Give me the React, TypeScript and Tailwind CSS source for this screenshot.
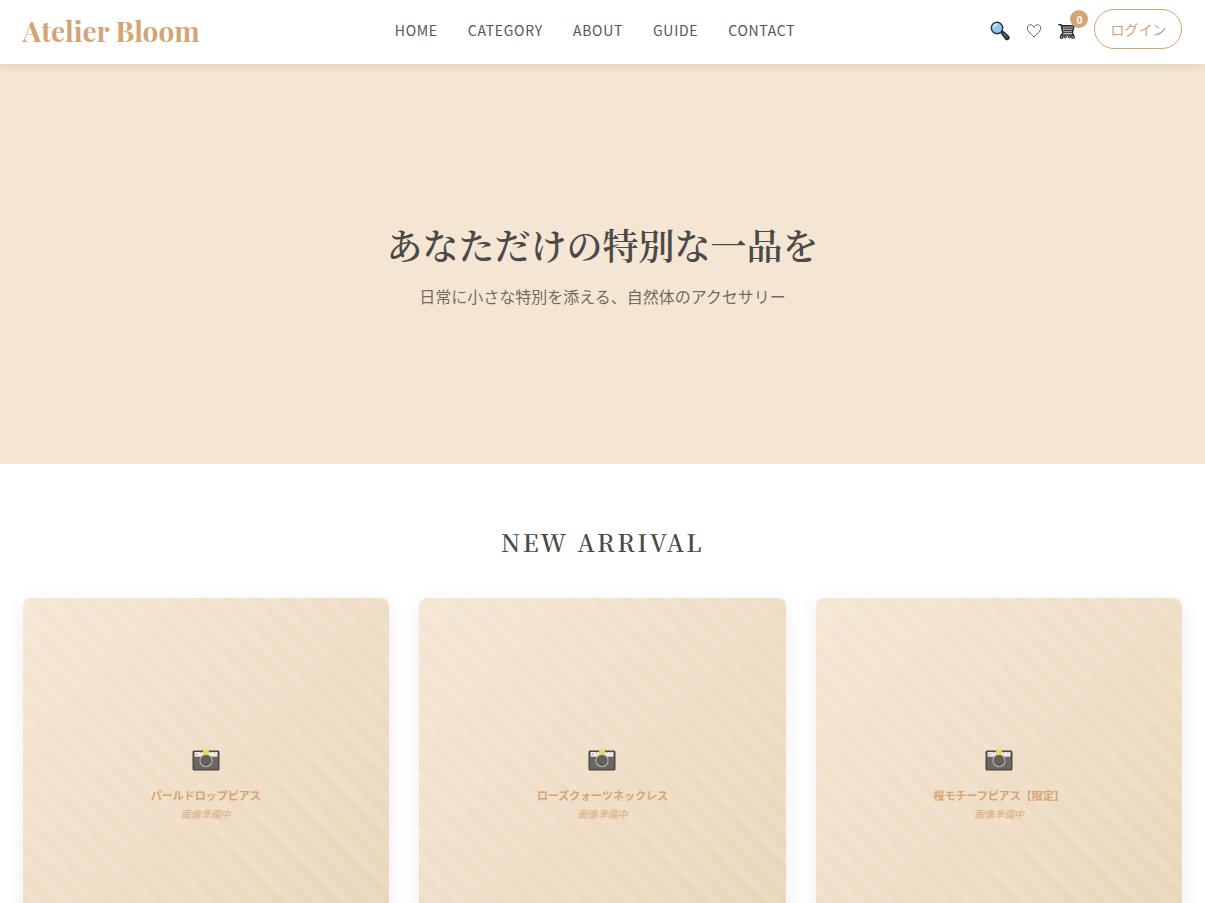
const products = ["パールドロップピアス", "ローズクォーツネックレス", "桜モチーフピアス【限定】"];
const links = ["HOME", "CATEGORY", "ABOUT", "GUIDE", "CONTACT"];

function SearchIcon() {
  return (
    <svg viewBox="0 0 20 20" className="size-5" aria-hidden="true">
      <path d="M10.8 11.6 12.4 9.8l6.1 5.5c1.6 1.6-.9 4.6-2.7 3z" fill="#3c4347" stroke="#1f2529" strokeWidth="1.2" />
      <path d="m13.5 12.8 3.6 3" stroke="#7d888d" strokeWidth="0.9" />
      <circle cx="7" cy="7" r="5.7" fill="#8fc7f0" stroke="#343b40" strokeWidth="1.5" />
      <path d="M3.5 6.5A3.4 3.4 0 0 1 7 3.5" fill="none" stroke="#d6efff" strokeWidth="1.5" strokeLinecap="round" />
    </svg>
  );
}

function CartIcon() {
  return (
    <svg viewBox="0 0 18 18" className="size-[18px]" aria-hidden="true" fill="none">
      <path d="M3.6 4h12.2l-1.5 6.6H5z" fill="#a8a8a8" />
      <path d="M1 2.8h2.2l1.7 8h9.4L16 3.8H3.6" stroke="#292929" strokeWidth="1.6" strokeLinejoin="round" strokeLinecap="round" />
      <path d="M5.4 6.2h8.6M5.8 8.5h7.8" stroke="#333" strokeWidth="1" />
      <path d="M4.9 10.8 3.2 13.2h12.4l-1.3-2.4" fill="#bbb" stroke="#292929" strokeWidth="1.3" strokeLinejoin="round" />
      <circle cx="3.6" cy="14.9" r="1.4" fill="#aaa" stroke="#222" strokeWidth="1.1" />
      <circle cx="7.2" cy="14.7" r="1.2" fill="#aaa" stroke="#222" strokeWidth="1" />
      <circle cx="11.4" cy="14.7" r="1.2" fill="#aaa" stroke="#222" strokeWidth="1" />
      <circle cx="15" cy="14.9" r="1.4" fill="#aaa" stroke="#222" strokeWidth="1.1" />
    </svg>
  );
}

function CameraIcon() {
  return (
    <svg viewBox="0 0 28 22" className="h-[22px] w-7" aria-hidden="true">
      <rect x="0.5" y="1.5" width="27" height="20" rx="1.5" fill="#4c4a46" />
      <rect x="2" y="8" width="24" height="12" fill="#6b6861" />
      <path d="M2.5 3h23v4.7h-23z" fill="#eeeae6" />
      <path d="M8 3h1.5M18 3h1.5M22 3h1.5" stroke="#68645f" strokeWidth="0.8" />
      <circle cx="4.8" cy="5.2" r="0.9" fill="#e79a8e" />
      <circle cx="14" cy="11.5" r="6" fill="#5c5a55" stroke="#bcb8b0" strokeWidth="1.1" />
      <circle cx="14" cy="11.5" r="3.8" fill="#65625c" />
      <path d="m11 2 1.7-1.4h2.6L17 2l.3 2.4-1.7 1.4h-3.2l-1.7-1.4z" fill="#e6df4e" />
    </svg>
  );
}

export default function App() {
  return (
    <div className="min-h-screen bg-white font-['Noto_Sans_CJK_JP',sans-serif] text-[#4a4a4a]">
      <header className="relative bg-white shadow-[0_2px_10px_rgba(0,0,0,0.1)]">
        <div className="mx-auto flex h-16 max-w-[1200px] items-center justify-between px-5 pb-1.5">
          <a href="#" className="pt-1 font-['Playfair_Display','Noto_Serif_CJK_JP','Liberation_Serif',serif] text-[28px] leading-10 font-bold text-[#d4a574]">
            Atelier Bloom
          </a>
          <nav className="flex gap-[30px] pt-px text-sm tracking-wider text-[#555]">
            {links.map((l) => <a key={l} href="#">{l}</a>)}
          </nav>
          <div className="flex items-center gap-[18px]">
            <div className="flex items-center gap-4 pt-1">
              <button aria-label="検索"><SearchIcon /></button>
              <button aria-label="お気に入り">
                <svg viewBox="0 0 16 16" className="size-4" aria-hidden="true">
                  <path d="M8 14.2C6.5 11.5 1.3 9.2 1.3 5.1 1.3 3 2.8 1.7 4.6 1.7 6.4 1.7 7.6 3.2 8 4.5c.4-1.3 1.6-2.8 3.4-2.8 1.8 0 3.3 1.3 3.3 3.4 0 4.1-5.2 6.4-6.7 9.1z" fill="none" stroke="#555" strokeWidth="0.9" />
                </svg>
              </button>
              <button aria-label="カート" className="relative">
                <CartIcon />
                <span className="absolute -top-3 -right-3 flex size-[18px] items-center justify-center rounded-full bg-[#d4a574] text-[10px] font-bold text-white">0</span>
              </button>
            </div>
            <button className="h-10 rounded-full border border-[#d4a574] px-[15px] text-sm text-[#d4a574]">ログイン</button>
          </div>
        </div>
      </header>
      <main>
        <section className="flex h-[400px] flex-col items-center justify-center gap-2 bg-[#f5e6d3] pb-0.5 text-center">
          <h1 className="font-['Noto_Serif_CJK_JP','Noto_Serif_JP',serif] text-4xl leading-[58px] font-semibold">あなただけの特別な一品を</h1>
          <p className="text-base leading-7 text-[#4a4a4a]/80">日常に小さな特別を添える、自然体のアクセサリー</p>
        </section>
        <section className="mx-auto max-w-[1200px] px-5 py-[58px]">
          <h2 className="mb-9 text-center font-['Noto_Serif_CJK_JP','Noto_Serif_JP','Liberation_Serif',serif] text-2xl leading-10 font-semibold tracking-widest">NEW ARRIVAL</h2>
          <div className="grid grid-cols-3 gap-[30px]">
            {products.map((name) => (
              <article key={name} className="overflow-hidden rounded-lg bg-white shadow-[0_5px_20px_rgba(0,0,0,0.08)]">
                <div className="flex aspect-square flex-col items-center justify-center bg-[repeating-linear-gradient(45deg,transparent_0_10px,rgba(255,255,255,0.1)_10px_20px),linear-gradient(135deg,#f5e6d3_0%,#e8d5b7_100%)] pt-2.5 text-center text-[#d4a574]">
                  <CameraIcon />
                  <h3 className="mt-3.5 text-[11px] leading-5 font-bold">{name}</h3>
                  <p className="text-[10px] leading-[18px] italic opacity-80">画像準備中</p>
                </div>
              </article>
            ))}
          </div>
        </section>
      </main>
    </div>
  );
}
